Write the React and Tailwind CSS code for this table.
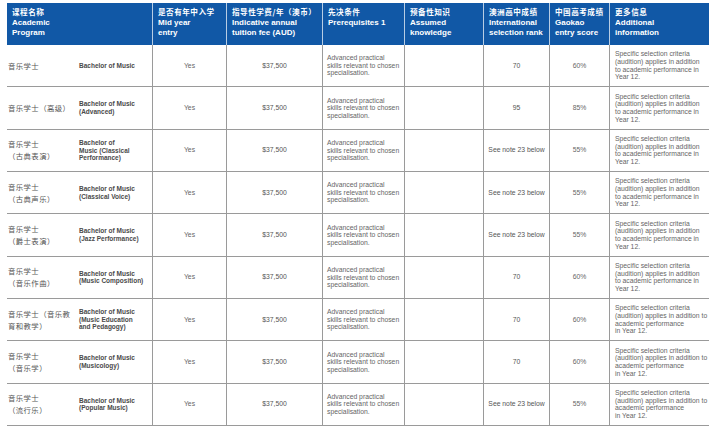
import React from "react";

const cn = '"Noto Sans CJK SC", sans-serif';
const en = '"Liberation Sans", Arial, sans-serif';

const infoA = ["Specific selection criteria", "(audition) applies in addition", "to academic performance in", "Year 12."];
const infoB = ["Specific selection criteria", "(audition) applies in addition to", "academic performance", "in Year 12."];

const rows = [
  { zh: ["音乐学士"], name: ["Bachelor of Music"], rank: "70", score: "60%", info: infoA },
  { zh: ["音乐学士（高级）"], name: ["Bachelor of Music", "(Advanced)"], rank: "95", score: "85%", info: infoA },
  { zh: ["音乐学士", "（古典表演）"], name: ["Bachelor of", "Music (Classical", "Performance)"], rank: "See note 23 below", score: "55%", info: infoA },
  { zh: ["音乐学士", "（古典声乐）"], name: ["Bachelor of Music", "(Classical Voice)"], rank: "See note 23 below", score: "55%", info: infoA },
  { zh: ["音乐学士", "（爵士表演）"], name: ["Bachelor of Music", "(Jazz Performance)"], rank: "See note 23 below", score: "55%", info: infoA },
  { zh: ["音乐学士", "（音乐作曲）"], name: ["Bachelor of Music", "(Music Composition)"], rank: "70", score: "60%", info: infoA },
  { zh: ["音乐学士（音乐教", "育和教学）"], name: ["Bachelor of Music", "(Music Education", "and Pedagogy)"], rank: "70", score: "60%", info: infoB },
  { zh: ["音乐学士", "（音乐学）"], name: ["Bachelor of Music", "(Musicology)"], rank: "70", score: "60%", info: infoB },
  { zh: ["音乐学士", "（流行乐）"], name: ["Bachelor of Music", "(Popular Music)"], rank: "See note 23 below", score: "55%", info: infoB },
];

const headers = [
  { zh: "是否有年中入学", en: ["Mid year", "entry"] },
  { zh: "指导性学费/年（澳币）", en: ["Indicative annual", "tuition fee (AUD)"] },
  { zh: "先决条件", en: ["Prerequisites 1"] },
  { zh: "预备性知识", en: ["Assumed", "knowledge"] },
  { zh: "澳洲高中成绩", en: ["International", "selection rank"] },
  { zh: "中国高考成绩", en: ["Gaokao", "entry score"] },
  { zh: "更多信息", en: ["Additional", "information"] },
];

const Lines = ({ items }) => items.map((t, i) => <div key={i} className="whitespace-nowrap">{t}</div>);

const HeadCell = ({ zh, lines, first }) => (
  <div className={`h-[42px] pl-[5px] pt-[4px] text-white leading-[10.5px] ${first ? "col-span-2" : "border-l border-white/70"}`}>
    <div className="text-[7.6px] font-bold tracking-[0.5px] whitespace-nowrap" style={{ fontFamily: cn }}>{zh}</div>
    <div className="text-[8px] font-bold" style={{ fontFamily: en }}>
      <Lines items={lines} />
    </div>
  </div>
);

const cell = "h-[42.33px] border-b border-[#9a9a9a] flex items-center";
const sep = "border-l border-[#6f6f6f]";

export default function App() {
  return (
    <div className="w-[720px] h-[437px] bg-white pt-[3px] pl-[7px] overflow-hidden" style={{ fontFamily: en }}>
      <div className="grid grid-cols-[72px_73px_74px_96px_82px_79px_66px_60px_100px] w-[702px]">
        <div className="col-span-9 grid grid-cols-subgrid bg-[#1158a6]">
          <HeadCell zh="课程名称" lines={["Academic", "Program"]} first />
          {headers.map((h) => (
            <HeadCell key={h.zh} zh={h.zh} lines={h.en} />
          ))}
        </div>

        {rows.map((r, i) => (
          <React.Fragment key={i}>
            <div className={`${cell} pl-[1px] text-[7.4px] leading-[12px] text-[#555] tracking-[0.4px]`} style={{ fontFamily: cn }}>
              <div><Lines items={r.zh} /></div>
            </div>
            <div className={`${cell} text-[6.5px] leading-[7.6px] font-bold text-[#4a4a4a]`}>
              <div><Lines items={r.name} /></div>
            </div>
            <div className={`${cell} ${sep} justify-center text-[6.8px] text-[#666]`}>Yes</div>
            <div className={`${cell} ${sep} justify-center text-[6.8px] text-[#555]`}>$37,500</div>
            <div className={`${cell} ${sep} pl-[4px] text-[6.8px] leading-[7.6px] text-[#666]`}>
              <div><Lines items={["Advanced practical", "skills relevant to chosen", "specialisation."]} /></div>
            </div>
            <div className={`${cell} ${sep}`}></div>
            <div className={`${cell} ${sep} justify-center text-[6.8px] text-[#555]`}>{r.rank}</div>
            <div className={`${cell} ${sep} justify-center text-[6.8px] text-[#666]`}>{r.score}</div>
            <div className={`${cell} ${sep} pl-[5px] text-[6.8px] leading-[7.6px] text-[#666]`}>
              <div><Lines items={r.info} /></div>
            </div>
          </React.Fragment>
        ))}
      </div>
    </div>
  );
}
